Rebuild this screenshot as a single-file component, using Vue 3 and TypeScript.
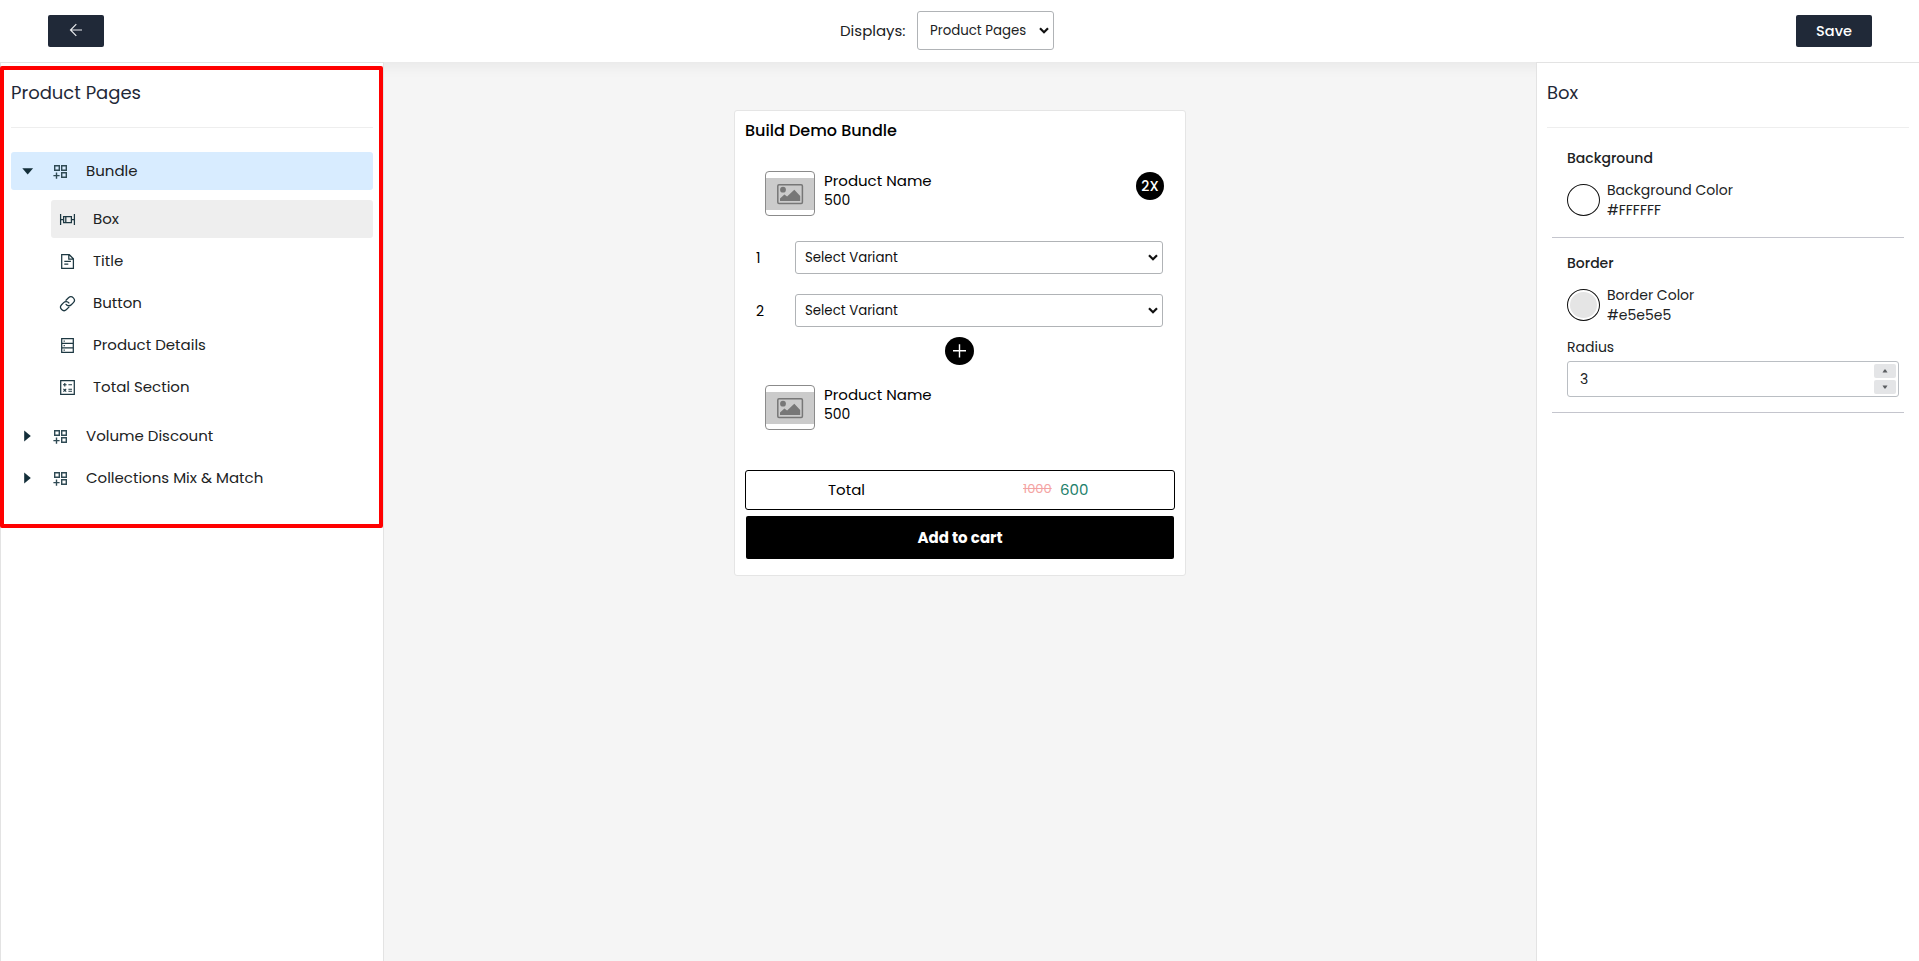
<script setup lang="ts">
import { ref } from 'vue'

type IconName = 'box' | 'title' | 'link' | 'details' | 'total'

interface Child {
  label: string
  icon: IconName
}

interface Group {
  label: string
  open: boolean
  children: Child[]
}

const groups = ref<Group[]>([
  {
    label: 'Bundle',
    open: true,
    children: [
      { label: 'Box', icon: 'box' },
      { label: 'Title', icon: 'title' },
      { label: 'Button', icon: 'link' },
      { label: 'Product Details', icon: 'details' },
      { label: 'Total Section', icon: 'total' },
    ],
  },
  { label: 'Volume Discount', open: false, children: [] },
  { label: 'Collections Mix & Match', open: false, children: [] },
])

const activeChild = ref('Box')
const display = ref('Product Pages')
const variants = [1, 2]
const radius = ref(3)
</script>

<template>
  <div class="app">
    <header class="topbar">
      <button class="btn back" aria-label="Back">
        <svg width="14" height="14" viewBox="0 0 14 14" fill="none" stroke="#e8eaed" stroke-width="1.2">
          <path d="M13 7H1.5M7.3 1.2 1.5 7l5.8 5.8" />
        </svg>
      </button>
      <div class="displays">
        <label class="displays-label">Displays:</label>
        <div class="select display-select">
          <select v-model="display">
            <option>Product Pages</option>
          </select>
          <svg class="chevron" width="10" height="7" viewBox="0 0 10 7" fill="none" stroke="#111" stroke-width="2.2">
            <path d="M1 1.2 5 5.2 9 1.2" />
          </svg>
        </div>
      </div>
      <button class="btn save">Save</button>
    </header>

    <div class="body">
      <aside class="panel left">
        <h2 class="panel-title">Product Pages</h2>
        <nav class="tree">
          <template v-for="g in groups" :key="g.label">
            <div class="row group" :class="{ open: g.open }" @click="g.open = !g.open">
              <svg class="caret" width="12" height="12" viewBox="0 0 12 12" fill="#142f3a">
                <path v-if="g.open" d="M.3 3.2h10.8L5.7 9.6z" />
                <path v-else d="M2.2.6v10.8L8.8 6z" />
              </svg>
              <svg class="group-icon" width="16" height="16" viewBox="0 0 16 16" fill="none" stroke="#2f4a54" stroke-width="1.4">
                <path d="M2.7 2.7h4.6v4.6H2.7zM9.7 2.7h4.6v4.6H9.7zM9.7 9.7h4.6v4.6H9.7zM4.5 9.5v6.2M1.4 12.6h6.2" />
              </svg>
              <span class="row-label">{{ g.label }}</span>
            </div>
            <div v-if="g.open && g.children.length" class="children">
              <div
                v-for="c in g.children"
                :key="c.label"
                class="row child"
                :class="{ active: c.label === activeChild }"
                @click="activeChild = c.label"
              >
                <svg class="child-icon" width="18" height="18" viewBox="0 0 18 18" fill="none" stroke="#1d3842" stroke-width="1.25">
                  <template v-if="c.icon === 'box'">
                    <path d="M2.6 4v11M16.4 4v11M5.6 6.5h7.8v6H5.6zM2.6 9.5h3M13.4 9.5h3M7.8 6.5v6" />
                  </template>
                  <template v-else-if="c.icon === 'title'">
                    <path d="M3.7 2.7h7.6l4.1 4.1v9.6H3.7zM10.8 2.7v4.5h4.6" />
                    <path d="M6.3 9.4h6.6M6.3 12h4" />
                  </template>
                  <template v-else-if="c.icon === 'link'">
                    <g transform="translate(1.2 1.4) scale(.69)" stroke-width="1.85" stroke-linecap="round">
                      <path d="M10 13a5 5 0 0 0 7.54.54l3-3a5 5 0 0 0-7.07-7.07l-3.6 3.6" />
                      <path d="M14 11a5 5 0 0 0-7.54-.54l-3 3a5 5 0 0 0 7.07 7.07l3.6-3.6" />
                    </g>
                  </template>
                  <template v-else-if="c.icon === 'details'">
                    <path d="M3.7 2.6h11.6v13.8H3.7zM3.7 7.3h11.6M3.7 11.8h11.6" />
                    <path d="M5.6 5h1.2M5.6 9.5h1.2M5.6 14.1h1.2" />
                  </template>
                  <template v-else>
                    <path d="M2.7 2.7h13.6v13.6H2.7z" />
                    <path d="M5 6.8h3.6M6.8 5v3.6M10.4 6.8H14M5.4 10.8l2.8 2.8M8.2 10.8l-2.8 2.8M10.4 11.2H14M10.4 13.3H14" stroke-width="1.1" />
                  </template>
                </svg>
                <span class="row-label">{{ c.label }}</span>
              </div>
            </div>
          </template>
        </nav>
        <div class="highlight"></div>
      </aside>

      <main class="canvas">
        <section class="card">
          <h3 class="card-title">Build Demo Bundle</h3>

          <div class="product">
            <div class="thumb">
              <svg width="48" height="32" viewBox="0 0 48 32">
                <rect width="48" height="32" fill="#cbcbcb" />
                <rect x="11.8" y="6.7" width="24.6" height="18.8" rx="1.2" fill="none" stroke="#777" stroke-width="1.5" />
                <circle cx="17" cy="11.7" r="2.9" fill="#777" />
                <path d="M14 23v-2.4l4.4-4.1 2.7 2 7.2-6.8L34.2 18v5z" fill="#777" />
              </svg>
            </div>
            <div class="product-text">
              <div>Product Name</div>
              <div class="product-price">500</div>
            </div>
            <div class="badge">2X</div>
          </div>

          <div class="variants">
            <div v-for="v in variants" :key="v" class="variant">
              <span class="variant-no">{{ v }}</span>
              <div class="select variant-select">
                <select>
                  <option>Select Variant</option>
                </select>
                <svg class="chevron" width="10" height="7" viewBox="0 0 10 7" fill="none" stroke="#111" stroke-width="2.2">
                  <path d="M1 1.2 5 5.2 9 1.2" />
                </svg>
              </div>
            </div>
          </div>

          <svg class="plus" width="29" height="28" viewBox="0 0 29 28">
            <ellipse cx="14.5" cy="14" rx="14.5" ry="14" />
            <path d="M14.5 7.2v13.2M8 13.7h13" stroke="#fff" stroke-width="1.4" />
          </svg>

          <div class="product">
            <div class="thumb">
              <svg width="48" height="32" viewBox="0 0 48 32">
                <rect width="48" height="32" fill="#cbcbcb" />
                <rect x="11.8" y="6.7" width="24.6" height="18.8" rx="1.2" fill="none" stroke="#777" stroke-width="1.5" />
                <circle cx="17" cy="11.7" r="2.9" fill="#777" />
                <path d="M14 23v-2.4l4.4-4.1 2.7 2 7.2-6.8L34.2 18v5z" fill="#777" />
              </svg>
            </div>
            <div class="product-text">
              <div>Product Name</div>
              <div class="product-price">500</div>
            </div>
          </div>

          <div class="total">
            <span class="total-label">Total</span>
            <span class="total-values"><s>1000</s><span class="total-new">600</span></span>
          </div>
          <button class="add">Add to cart</button>
        </section>
      </main>

      <aside class="panel right">
        <h2 class="panel-title">Box</h2>
        <section class="setting first">
          <h4>Background</h4>
          <div class="color">
            <span class="swatch white"></span>
            <div>
              <div>Background Color</div>
              <div>#FFFFFF</div>
            </div>
          </div>
        </section>
        <section class="setting">
          <h4>Border</h4>
          <div class="color">
            <span class="swatch grey"></span>
            <div>
              <div>Border Color</div>
              <div>#e5e5e5</div>
            </div>
          </div>
          <div class="radius-label">Radius</div>
          <div class="number">
            <span>{{ radius }}</span>
            <div class="spin">
              <button aria-label="Increase" @click="radius++">
                <svg width="6" height="4" viewBox="0 0 6 4" fill="#5c5f62"><path d="M.5 3.5h5L3.6.5H2.4z" /></svg>
              </button>
              <button aria-label="Decrease" @click="radius--">
                <svg width="6" height="4" viewBox="0 0 6 4" fill="#5c5f62"><path d="M.5.5h5L3.6 3.5H2.4z" /></svg>
              </button>
            </div>
          </div>
        </section>
      </aside>
    </div>
  </div>
</template>

<style>
body {
  margin: 0;
  overflow: hidden;
}
</style>

<style scoped>
.app {
  height: 961px;
  display: flex;
  flex-direction: column;
  background: #f5f5f5;
  color: #202223;
  font-family: Poppins, Inter, "Open Sans", sans-serif;
  font-feature-settings: "cv11";
  font-size: 15px;
}
.app * {
  box-sizing: border-box;
}
button,
select {
  font-family: inherit;
  font-feature-settings: inherit;
  margin: 0;
  padding: 0;
  border: 0;
}
h2,
h3,
h4 {
  margin: 0;
}
svg {
  display: block;
  flex: none;
}

.topbar {
  position: relative;
  flex: none;
  height: 62px;
  padding: 0 47px 0 48px;
  display: flex;
  align-items: center;
  justify-content: space-between;
  background: #fff;
  box-shadow: 0 4px 14px rgba(0, 0, 0, 0.06);
}
.btn {
  height: 32px;
  border-radius: 2px;
  background: #202938;
  color: #fff;
  display: flex;
  align-items: center;
  justify-content: center;
}
.back {
  width: 56px;
  padding-bottom: 2px;
}
.save {
  width: 76px;
  font-size: 14.5px;
  font-weight: 500;
}
.displays {
  display: flex;
  align-items: center;
  margin: 0 6px 1px 0;
}
.displays-label {
  width: 77px;
}
.select {
  position: relative;
}
.select select {
  width: 100%;
  height: 100%;
  appearance: none;
  background: #fff;
  border: 1px solid #b0b3b6;
  border-radius: 3px;
  color: #111;
  font-size: 13.33px;
}
.chevron {
  position: absolute;
  right: 5px;
  top: 50%;
  margin-top: -4px;
}
.display-select {
  width: 137px;
  height: 39px;
}
.display-select select {
  padding-left: 12px;
  color: #202223;
}

.body {
  flex: 1;
  display: flex;
}
.panel {
  position: relative;
  z-index: 1;
  flex: none;
  background: #fff;
  border: 1px solid #e3e3e3;
  border-bottom: 0;
  padding: 0 10px;
}
.left {
  width: 384px;
}
.right {
  width: 383px;
  border-right: 0;
}
.panel-title {
  height: 65px;
  padding-bottom: 5px;
  border-bottom: 1px solid #eee;
  line-height: 59px;
  font-size: 18px;
  font-weight: 400;
  color: #1f2937;
}
.highlight {
  position: absolute;
  left: -1px;
  top: 3px;
  width: 383px;
  height: 462px;
  border: 4px solid #f00;
  border-radius: 2px;
  pointer-events: none;
}
.tree {
  margin-top: 24px;
  display: flex;
  flex-direction: column;
  gap: 4px;
}
.row {
  height: 38px;
  display: flex;
  align-items: center;
  border-radius: 3px;
}
.row-label {
  padding-bottom: 2px;
}
.group {
  padding-left: 11px;
}
.group.open {
  background: #d8ecff;
}
.group-icon {
  margin: 0 18px;
}
.children {
  margin: 6px 0 7px 40px;
  display: flex;
  flex-direction: column;
  gap: 4px;
}
.child {
  padding-left: 7px;
}
.child.active {
  background: #eee;
}
.child-icon {
  margin-right: 17px;
}

.canvas {
  flex: 1;
  padding-top: 48px;
}
.card {
  width: 452px;
  height: 466px;
  margin: 0 auto;
  padding: 0 10px;
  background: #fff;
  border: 1px solid #e5e5e5;
  border-radius: 3px;
  color: #000;
  display: flex;
  flex-direction: column;
}
.card-title {
  height: 38px;
  line-height: 40px;
  font-size: 16px;
  font-weight: 500;
}
.product {
  margin: 22px 11px 0 20px;
  height: 45px;
  display: flex;
}
.thumb {
  width: 50px;
  height: 45px;
  padding-top: 6px;
  border: 1px solid #8b8b8b;
  border-radius: 4px;
}
.product-text {
  padding-left: 9px;
  flex: 1;
  line-height: 19.5px;
}
.product-price {
  font-size: 14px;
}
.badge {
  width: 28px;
  height: 28px;
  margin-top: 1px;
  border-radius: 50%;
  background: #000;
  color: #fff;
  font-size: 14px;
  font-weight: 500;
  line-height: 28px;
  text-align: center;
}
.variants {
  margin: 25px 12px 0 11px;
  display: flex;
  flex-direction: column;
  gap: 20px;
}
.variant {
  display: flex;
  align-items: center;
}
.variant-no {
  width: 39px;
  font-size: 14px;
  padding-top: 1px;
}
.variant-select {
  flex: 1;
  height: 33px;
}
.variant-select select {
  padding-left: 9px;
}
.plus {
  margin: 10px 0 0 200px;
}
.plus + .product {
  margin-top: 20px;
}
.total {
  margin-top: 40px;
  height: 40px;
  padding: 0 0 2px 82px;
  border: 1px solid #000;
  border-radius: 3px;
  display: flex;
  align-items: center;
}
.total-label {
  width: 195px;
}
.total-values {
  display: flex;
  align-items: center;
}
.total s {
  width: 37px;
  color: #f4a3a3;
  font-size: 13px;
}
.total-new {
  color: #1b806a;
}
.add {
  margin: 6px 1px 0;
  height: 43px;
  border-radius: 2px;
  background: #000;
  color: #fff;
  font-size: 15px;
  font-weight: 700;
}

.setting {
  margin: 0 5px;
  padding: 15px 5px 15px 15px;
  border-bottom: 1px solid #c4c5cd;
  font-size: 14px;
  line-height: 20px;
}
.setting.first {
  padding-top: 20px;
  padding-bottom: 17px;
}
.setting h4 {
  font-size: 14px;
  font-weight: 500;
}
.color {
  margin-top: 12px;
  height: 40px;
  display: flex;
  align-items: center;
}
.swatch {
  width: 33px;
  height: 32px;
  margin-right: 7px;
  border: 1px solid #111;
  border-radius: 50%;
  padding: 2px;
  background-clip: content-box;
}
.white {
  background-color: #fff;
}
.grey {
  background-color: #e5e5e5;
}
.radius-label {
  margin-top: 12px;
}
.number {
  margin-top: 4px;
  height: 36px;
  padding: 0 2px 0 12px;
  border: 1px solid #babec3;
  border-radius: 3px;
  display: flex;
  align-items: center;
  justify-content: space-between;
}
.spin {
  display: flex;
  flex-direction: column;
  gap: 2px;
}
.spin button {
  width: 22px;
  height: 14px;
  border-radius: 2px;
  background: #e4e5e7;
  display: flex;
  align-items: center;
  justify-content: center;
}
</style>
